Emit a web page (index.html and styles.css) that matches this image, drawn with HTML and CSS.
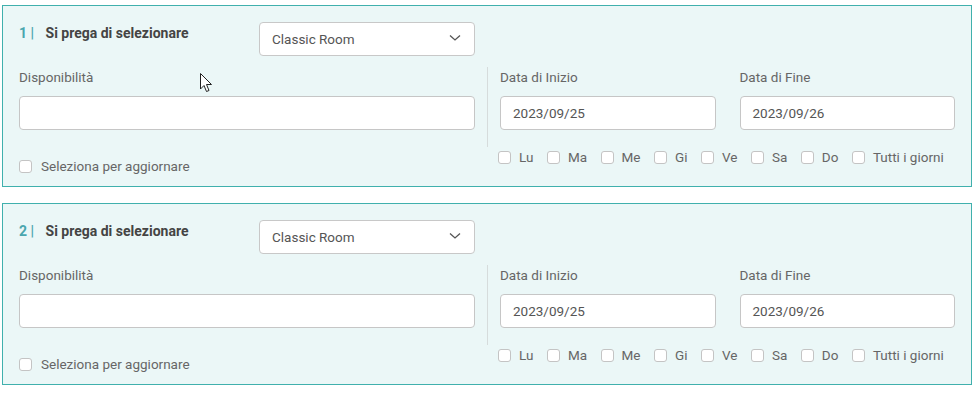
FILE: index.html
```html
<!DOCTYPE html>
<html lang="it">
<head>
    <meta charset="UTF-8">
    <meta name="viewport" content="width=device-width, initial-scale=1.0">
    <title>Selezione Camere</title>
    <link rel="stylesheet" href="styles.css">
</head>
<body>

    <div class="panel">
        <div class="head">
            <div class="titolo"><span class="numero">1 |</span> Si prega di selezionare</div>
            <div class="select">
                <span>Classic Room</span>
                <svg class="chevron" width="12" height="8" viewBox="0 0 12 8"><path d="M1 1.5 L6 6 L11 1.5" fill="none" stroke="#555" stroke-width="1.3"/></svg>
            </div>
        </div>
        <div class="corpo">
            <div class="sinistra">
                <label class="etichetta">Disponibilità</label>
                <div class="campo"></div>
                <label class="check aggiorna"><input type="checkbox"> Seleziona per aggiornare</label>
            </div>
            <div class="destra">
                <div class="date">
                    <div class="data">
                        <label class="etichetta">Data di Inizio</label>
                        <div class="campo">2023/09/25</div>
                    </div>
                    <div class="data">
                        <label class="etichetta">Data di Fine</label>
                        <div class="campo">2023/09/26</div>
                    </div>
                </div>
                <div class="giorni">
                    <label class="check"><input type="checkbox"> Lu</label>
                    <label class="check"><input type="checkbox"> Ma</label>
                    <label class="check"><input type="checkbox"> Me</label>
                    <label class="check"><input type="checkbox"> Gi</label>
                    <label class="check"><input type="checkbox"> Ve</label>
                    <label class="check"><input type="checkbox"> Sa</label>
                    <label class="check"><input type="checkbox"> Do</label>
                    <label class="check"><input type="checkbox"> Tutti i giorni</label>
                </div>
            </div>
        </div>
        <!-- cursore del mouse -->
        <svg class="cursore" width="13" height="20" viewBox="0 0 13 20"><path d="M0.5 0.5 L0.5 16 L4 12.5 L6.5 18.5 L9 17.5 L6.5 11.5 L11.5 11.5 Z" fill="#fff" stroke="#222" stroke-width="1"/></svg>
    </div>

    <div class="panel">
        <div class="head">
            <div class="titolo"><span class="numero">2 |</span> Si prega di selezionare</div>
            <div class="select">
                <span>Classic Room</span>
                <svg class="chevron" width="12" height="8" viewBox="0 0 12 8"><path d="M1 1.5 L6 6 L11 1.5" fill="none" stroke="#555" stroke-width="1.3"/></svg>
            </div>
        </div>
        <div class="corpo">
            <div class="sinistra">
                <label class="etichetta">Disponibilità</label>
                <div class="campo"></div>
                <label class="check aggiorna"><input type="checkbox"> Seleziona per aggiornare</label>
            </div>
            <div class="destra">
                <div class="date">
                    <div class="data">
                        <label class="etichetta">Data di Inizio</label>
                        <div class="campo">2023/09/25</div>
                    </div>
                    <div class="data">
                        <label class="etichetta">Data di Fine</label>
                        <div class="campo">2023/09/26</div>
                    </div>
                </div>
                <div class="giorni">
                    <label class="check"><input type="checkbox"> Lu</label>
                    <label class="check"><input type="checkbox"> Ma</label>
                    <label class="check"><input type="checkbox"> Me</label>
                    <label class="check"><input type="checkbox"> Gi</label>
                    <label class="check"><input type="checkbox"> Ve</label>
                    <label class="check"><input type="checkbox"> Sa</label>
                    <label class="check"><input type="checkbox"> Do</label>
                    <label class="check"><input type="checkbox"> Tutti i giorni</label>
                </div>
            </div>
        </div>
    </div>

</body>
</html>
```

FILE: styles.css
```css
body {
    font-family: Roboto, "Liberation Sans", Arial, sans-serif;
    font-size: 13.5px;
    color: #666;
    background-color: #fff;
    margin: 5px 1px 0 2px;
}
.panel {
    position: relative;
    background-color: #ebf7f7;
    border: 1px solid #40b0ad;
    padding: 16px 16px 10px 16px;
    margin-bottom: 16px;
}
.head {
    display: flex;
    justify-content: space-between;
    align-items: flex-start;
    width: 456px;
    height: 34px;
}
.titolo {
    font-size: 14px;
    font-weight: bold;
    color: #444;
    line-height: 20px;
    margin-top: 1px;
}
.numero {
    color: #4aa6ae;
    margin-right: 8px;
}
.select {
    box-sizing: border-box;
    width: 216px;
    height: 34px;
    background-color: #fff;
    border: 1px solid #c8c8c8;
    border-radius: 4px;
    padding: 0 13px 0 12px;
    display: flex;
    align-items: center;
    justify-content: space-between;
    color: #555;
}
.chevron {
    margin-top: -2px;
}
.corpo {
    display: grid;
    grid-template-columns: 456px 1fr;
    margin-top: 11px;
}
.etichetta {
    display: block;
    line-height: 20px;
    margin-bottom: 9px;
}
.campo {
    box-sizing: border-box;
    height: 34px;
    background-color: #fff;
    border: 1px solid #c6c6c6;
    border-radius: 4px;
    padding: 0 12px;
    line-height: 32px;
    color: #555;
}
.check {
    display: flex;
    align-items: center;
    gap: 8px;
    line-height: 20px;
    white-space: nowrap;
}
.check input {
    appearance: none;
    -webkit-appearance: none;
    box-sizing: border-box;
    width: 13px;
    height: 13px;
    margin: 0;
    background-color: #fff;
    border: 1px solid #c4c4c4;
    border-radius: 3px;
}
.aggiorna {
    margin-top: 26px;
    gap: 9px;
}
.destra {
    margin-left: 12px;
}
.date {
    display: flex;
    gap: 24px;
    border-left: 1px solid #d6dcdc;
    padding-left: 12px;
    padding-bottom: 17px;
}
.data {
    flex: 1;
}
.giorni {
    display: flex;
    gap: 13.5px;
    margin-left: 11px;
}
.cursore {
    position: absolute;
    left: 197px;
    top: 67px;
}
```
